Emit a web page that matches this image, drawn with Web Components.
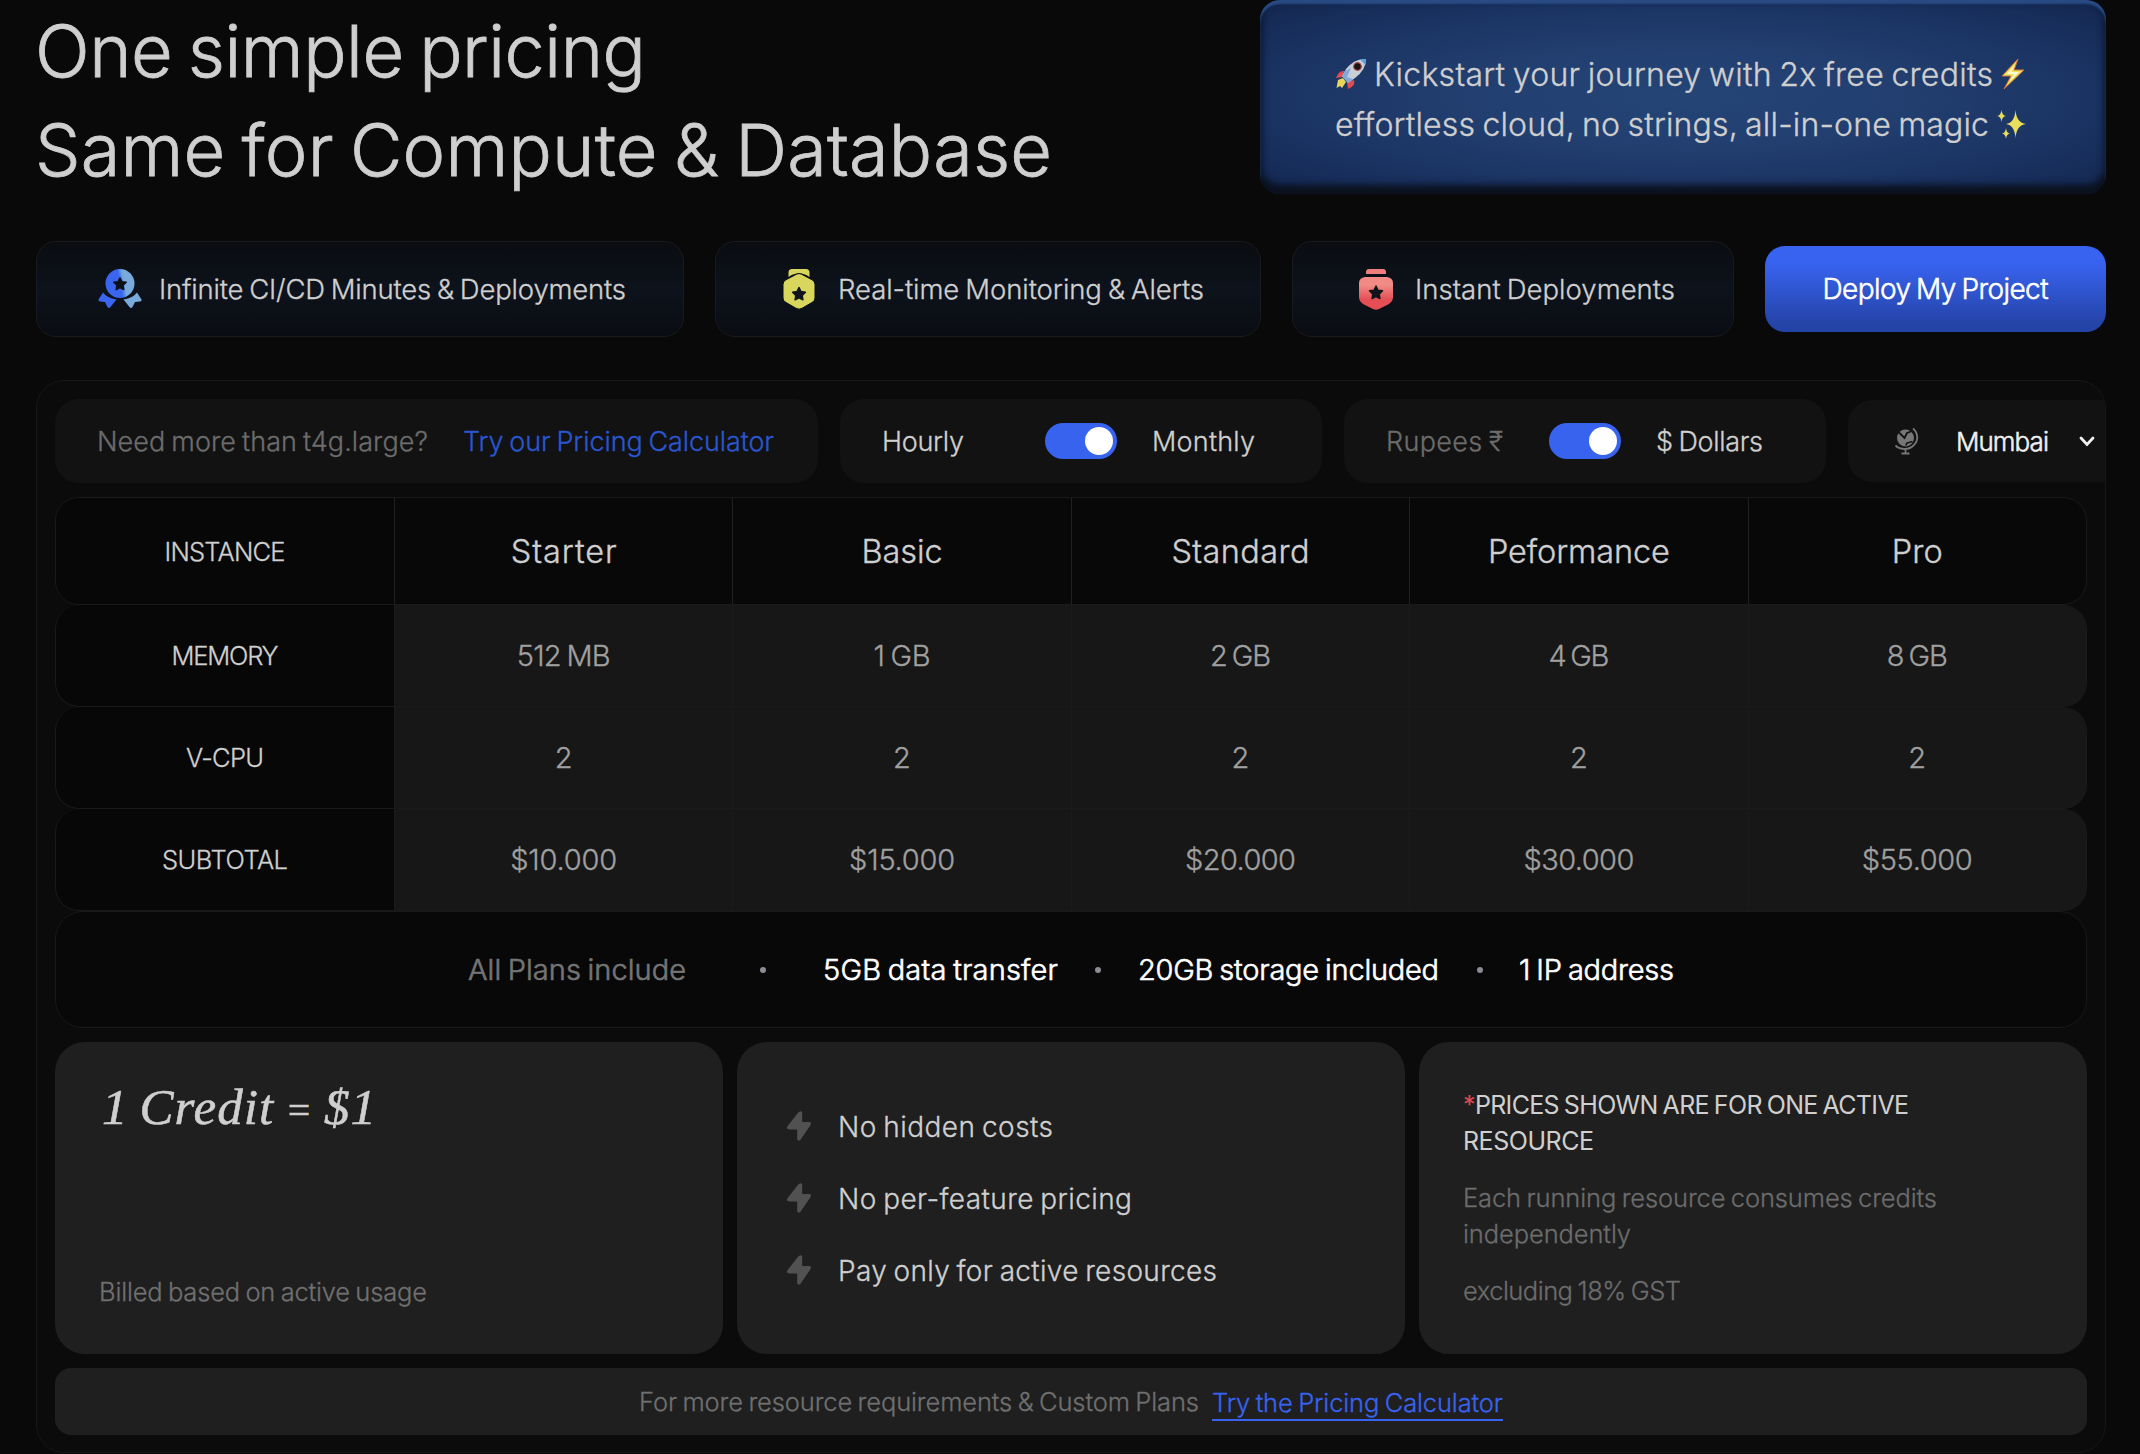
<!DOCTYPE html>
<html lang="en">
<head>
<meta charset="utf-8">
<title>Pricing</title>
<style>
  html, body { margin: 0; background: #090909; }
  body {
    height: 1454px;
    overflow: hidden;
    color: #cfcfcf;
    font-family: Inter, "Open Sans", "Liberation Sans", sans-serif;
    font-weight: 300;
    --stroke: 0.011em;
  }
</style>
</head>
<body>
<pricing-page>
  <page-title slot="title">
    <text-run size="72" w="611">One simple pricing</text-run>
    <text-run size="72" w="1017">Same for Compute &amp; Database</text-run>
  </page-title>
  <promo-banner slot="promo"></promo-banner>

  <feature-pill slot="features" icon="ribbon" style="width:648px"><text-run size="27.5" w="467">Infinite CI/CD Minutes &amp; Deployments</text-run></feature-pill>
  <feature-pill slot="features" icon="hex" style="width:546px"><text-run size="27.5" w="366">Real-time Monitoring &amp; Alerts</text-run></feature-pill>
  <feature-pill slot="features" icon="shield" style="width:442px"><text-run size="27.5" w="260">Instant Deployments</text-run></feature-pill>
  <deploy-button slot="features"><text-run size="28" w="226">Deploy My Project</text-run></deploy-button>

  <pricing-toolbar slot="panel"></pricing-toolbar>
  <plan-table slot="panel"></plan-table>
  <plan-includes slot="panel"></plan-includes>
  <card-row slot="panel">
    <info-card>
      <credit-rate></credit-rate>
    </info-card>
    <info-card>
      <perk-list items="No hidden costs:215|No per-feature pricing:294|Pay only for active resources:379"></perk-list>
    </info-card>
    <info-card>
      <price-note></price-note>
    </info-card>
  </card-row>
  <custom-plans slot="panel"></custom-plans>
</pricing-page>

<script>
const icons = {
  ribbon: `<svg width="46" height="42" viewBox="0 0 46 42">
    <defs><linearGradient id="g" x1="0" x2="1" y1=".2" y2="0"><stop offset=".42" stop-color="#3a66ef"/><stop offset=".58" stop-color="#78abdc"/></linearGradient></defs>
    <path d="M6 24.500L1.500 31.500Q1 33.500 3 33.500L8 34L10.500 39Q12 41 13.500 39L19.500 31.500Q10 30 6 24.500Z" fill="#3a66ef"/>
    <path d="M40 24.500L44.500 31.500Q45 33.500 43 33.500L38 34L35.500 39Q34 41 32.500 39L26.500 31.500Q36 30 40 24.500Z" fill="#78abdc"/>
    <circle cx="23" cy="15.500" r="14.500" fill="url(#g)"/>
    <path d="M23 9.800l1.900 3.900 4.300.6-3.100 3 .7 4.300-3.800-2-3.800 2 .7-4.300-3.100-3 4.300-.6z" fill="#0c1119" stroke="#0c1119" stroke-width="1.500" stroke-linejoin="round"/></svg>`,
  hex: `<svg width="46" height="42" viewBox="0 0 46 42">
    <path d="M12.500 9V4.500Q12.500 1 16 1H30Q33.500 1 33.500 4.500V9Q23 1.500 12.500 9Z" fill="#d9d65e"/>
    <path d="M20.500 6.200Q23 4.900 25.500 6.200L36.500 12Q39 13.600 39 16.500V30Q39 32.600 36.800 34L26 40.300Q23 42 20 40.300L9.200 34Q7 32.600 7 30V16.500Q7 13.600 9.500 12Z" fill="#d9d65e" stroke="#0b0e14" stroke-width="1"/>
    <path d="M23 19.500l2 4 4.400.7-3.200 3.200.7 4.400-3.900-2-3.900 2 .7-4.400-3.200-3.200 4.400-.7z" fill="#11151b" stroke="#11151b" stroke-width="1.500" stroke-linejoin="round"/></svg>`,
  shield: `<svg width="46" height="42" viewBox="0 0 46 42">
    <defs><linearGradient id="g" x1="0" x2="0" y1="0" y2="1"><stop offset=".25" stop-color="#f08b86"/><stop offset=".7" stop-color="#e54e55"/></linearGradient></defs>
    <path d="M13 6V4Q13 1 16 1H30Q33 1 33 4V6Z" fill="#ee7f7c"/>
    <path d="M12 9H34Q40 10 40 15V29Q40 34 35 36.500L26 41Q23 42.300 20 41L11 36.500Q6 34 6 29V15Q6 10 12 9Z" fill="url(#g)"/>
    <path d="M23 18l2 4.200 4.500.6-3.300 3.300.7 4.500-3.900-2.100-3.900 2.100.7-4.500-3.300-3.300 4.500-.6z" fill="#11151b" stroke="#11151b" stroke-width="1.500" stroke-linejoin="round"/></svg>`,
  rocket: `<svg width="32" height="32" viewBox="0 0 32 32">
    <path d="M9 13Q4 12 1 20L8 19Z" fill="#e04a50"/><path d="M19 22Q21 28 13 31L12 24Z" fill="#e04a50"/>
    <path d="M3 22L8 20L11 24L7 30L5 28L1.500 30Z" fill="#e8d458"/>
    <path d="M31 1Q20 0 11 11L7 18L13 25L20 20Q31 12 31 1Z" fill="#c9ced6"/>
    <path d="M31 1L25 1.500L30.500 7Z" fill="#5e9bd8"/>
    <path d="M10 13L16 10L12 19L18 21L13 25L7 18Z" fill="#7fa9dd"/>
    <circle cx="22.500" cy="8.500" r="3.800" fill="#1a1416" stroke="#a8484c" stroke-width="1.200"/></svg>`,
  zap: `<svg width="26" height="32" viewBox="0 0 26 32">
    <path d="M18 1L2 18H11L4 31L24 12H14Z" fill="#ece25e" stroke="#d2703f" stroke-width="1"/>
    <path d="M15 7L7 16H14L10 23L19 14H11Z" fill="#fbf9d8"/></svg>`,
  sparkles: `<svg width="30" height="30" viewBox="0 0 30 30" fill="#e6de5c">
    <path d="M18.500 1Q19.500 14 29 15Q19.500 16 18.500 29Q17.500 16 9 15Q17.500 14 18.500 1Z"/>
    <path d="M4.500 1Q5 6.500 9 7Q5 7.500 4.500 13Q4 7.500 0 7Q4 6.500 4.500 1Z"/>
    <path d="M9 19Q9.500 24 13 24.500Q9.500 25 9 30Q8.500 25 5 24.500Q8.500 24 9 19Z"/></svg>`,
  globe: `<svg width="26" height="28" viewBox="0 0 26 28" fill="none" stroke="#777" stroke-width="1.800">
    <circle cx="11.500" cy="11" r="8.500" fill="#777" stroke="none"/>
    <path d="M5 5.500L10.500 11L13 6L17 4.500" stroke="#121212" stroke-width="1.800"/>
    <path d="M12 18.500Q12 15.500 15 15.500L18.500 14.500" stroke="#121212" stroke-width="1.500"/>
    <path d="M19 1.500Q25 7 22.500 14.500Q18.500 22 11 22Q5 22 1.500 18.500M11.500 22V26M7.500 26.500H15.500"/></svg>`,
  bolt: `<svg width="26" height="32" viewBox="0 0 26 32" fill="#515151">
    <path d="M14 1.500Q16.200.8 16.200 3V12H23Q26 12.300 24.600 15L14.500 29.800Q12 32 11.200 29V19.500H3Q0 19 1.400 16.300L11.500 3.500Q12.800 1.700 14 1.500Z"/></svg>`
};

// Base for every element: opens a shadow root and fills it from a template.
class Base extends HTMLElement {
  constructor() {
    super();
    this.dom = this.attachShadow({ mode: "open" });
  }

  connectedCallback() {
    const template = document.createElement("template");
    template.innerHTML = `<style>${this.css()}</style>${this.markup()}`;
    this.dom.replaceChildren(document.importNode(template.content, true));
    this.ready();
  }

  css() { return ":host { display: block; }"; }
  markup() { return "<slot></slot>"; }
  ready() {}
}

// One line of text, tracked so that it fills the width it is given.
class TextRun extends Base {
  css() {
    return `
      :host { display: block; flex: none; white-space: nowrap; width: ${this.getAttribute("w")}px; }
      span {
        display: block; width: max-content; font-size: ${this.getAttribute("size")}px;
        word-spacing: -0.06em; -webkit-text-stroke: var(--stroke) currentColor;
      }
    `;
  }
  markup() { return "<span><slot></slot></span>"; }
  ready() {
    const span = this.dom.querySelector("span");
    const count = this.textContent.length;
    if (count < 2) return;
    const gap = (Number(this.getAttribute("w")) - span.getBoundingClientRect().width) / (count - 1);
    span.style.letterSpacing = `${gap.toFixed(3)}px`;
  }
}

class PricingPage extends Base {
  css() {
    return `
      :host { display: block; padding: 0 34px 0 36px; }
      header { display: flex; justify-content: space-between; height: 241px; }
      .features { display: flex; align-items: center; justify-content: space-between; height: 96px; }
      .panel {
        display: flex; flex-direction: column; box-sizing: border-box;
        height: 1073px; margin-top: 43px; padding: 18px 0 0 18px; overflow: hidden;
        background: #0b0b0b; border: 1px solid #171717; border-radius: 28px;
      }
    `;
  }
  markup() {
    return `
      <header><slot name="title"></slot><slot name="promo"></slot></header>
      <div class="features"><slot name="features"></slot></div>
      <div class="panel"><slot name="panel"></slot></div>
    `;
  }
}

class PageTitle extends Base {
  css() { return ":host { display: block; padding-top: 1px; line-height: 99px; margin-left: -1px; }"; }
}

class PromoBanner extends Base {
  css() {
    return `
      :host {
        display: flex; flex-direction: column; box-sizing: border-box;
        width: 846px; height: 194px; padding: 50px 0 0 75px; line-height: 50px;
        border-radius: 20px;
        background: radial-gradient(ellipse 80% 80% at 50% 50%, #254577 0%, #213e6f 35%, #182f5d 70%, #102045 100%);
        box-shadow: inset 0 4px 2px #284b84, inset 0 -9px 7px #0b111d, inset 0 0 8px #0e1a33;
      }
      div { display: flex; align-items: center; height: 50px; }
      svg { margin-bottom: 2px; }
    `;
  }
  markup() {
    return `
      <div style="gap:7px">${icons.rocket}<text-run size="32" w="619">Kickstart your journey with 2x free credits</text-run>${icons.zap}</div>
      <div style="gap:8px"><text-run size="32" w="654">effortless cloud, no strings, all-in-one magic</text-run>${icons.sparkles}</div>
    `;
  }
}

class FeaturePill extends Base {
  css() {
    return `
      :host {
        display: flex; align-items: center; gap: 16px; box-sizing: border-box; height: 96px;
        padding: 0 0 1px 60px; border: 1px solid #191a1d; border-radius: 20px;
        background: linear-gradient(#0a0c10, #0d131c 50%, #0a0c12);
      }
      svg { flex: none; }
      ::slotted(text-run) { margin-top: 1px; }
    `;
  }
  markup() { return `${icons[this.getAttribute("icon")]}<slot></slot>`; }
}

class DeployButton extends Base {
  css() {
    return `
      :host {
        display: flex; align-items: center; justify-content: center; width: 341px; height: 86px;
        border-radius: 20px; color: #fff; --stroke: 0.02em;
        background: linear-gradient(#3863f0 20%, #2443a6 92%);
      }
    `;
  }
}

class ToggleSwitch extends Base {
  css() {
    return `
      :host {
        display: flex; align-items: center; justify-content: flex-end; box-sizing: border-box; flex: none;
        width: 72px; height: 36px; padding-right: 4px; border-radius: 18px; background: #3863ee;
      }
      i { width: 28px; height: 28px; border-radius: 50%; background: #fff; }
    `;
  }
  markup() { return "<i></i>"; }
}

class PricingToolbar extends Base {
  css() {
    return `
      :host { display: flex; align-items: center; gap: 22px; height: 84px; flex: none; }
      .box {
        display: flex; align-items: center; flex: none; box-sizing: border-box; height: 84px;
        border-radius: 24px; background: #121212;
      }
      .muted { color: #6c6c6c; }
      .link { color: #2a56cf; }
      .region { height: 82px; width: 300px; padding-left: 46px; color: #f0f0f0; }
    `;
  }
  markup() {
    return `
      <div class="box" style="width:763px;padding-left:42px;gap:35px">
        <text-run class="muted" size="27" w="331">Need more than t4g.large?</text-run>
        <text-run class="link" size="27" w="311">Try our Pricing Calculator</text-run>
      </div>
      <div class="box" style="width:482px;padding-left:42px">
        <text-run size="27" w="82">Hourly</text-run>
        <toggle-switch style="margin:0 35px 0 81px"></toggle-switch>
        <text-run size="27" w="103">Monthly</text-run>
      </div>
      <div class="box" style="width:482px;padding-left:42px">
        <text-run class="muted" size="27" w="117">Rupees ₹</text-run>
        <toggle-switch style="margin:0 35px 0 46px"></toggle-switch>
        <text-run size="27" w="107">$ Dollars</text-run>
      </div>
      <div class="box region">
        ${icons.globe}
        <text-run size="26" w="93" style="margin:0 30px 0 36px;--stroke:0.02em">Mumbai</text-run>
        <svg width="16" height="11" viewBox="0 0 16 11" fill="none" stroke="#f0f0f0" stroke-width="2.800" stroke-linecap="round"><path d="M2 2L8 8.500L14 2"/></svg>
      </div>
    `;
  }
}

class PlanTable extends Base {
  css() {
    return `
      :host { display: block; flex: none; width: 2032px; margin-top: 14px; }
      .row {
        display: grid; grid-template-columns: 338px repeat(5, 1fr); box-sizing: border-box; height: 102px;
        border: 1px solid #1a1a1a; border-top: 0; border-radius: 24px; overflow: hidden; background: #171717;
      }
      .row > div { display: flex; align-items: center; justify-content: center; border-left: 1px solid #1b1b1b; color: #a0a0a0; }
      .row > div:first-child { border-left: 0; background: #070707; color: #cfcfcf; }
      .head { height: 108px; border-top: 1px solid #1a1a1a; background: #080808; }
      .head > div { border-color: #202020; color: #cfcfcf; }
    `;
  }
  markup() {
    // each cell is [text, width]
    const rows = [
      [["INSTANCE", 121], ["Starter", 106], ["Basic", 81], ["Standard", 138], ["Peformance", 182], ["Pro", 51]],
      [["MEMORY", 107], ["512 MB", 94], ["1 GB", 57], ["2 GB", 61], ["4 GB", 61], ["8 GB", 61]],
      [["V-CPU", 78], ["2", 18], ["2", 18], ["2", 18], ["2", 18], ["2", 18]],
      [["SUBTOTAL", 126], ["$10.000", 107], ["$15.000", 106], ["$20.000", 111], ["$30.000", 111], ["$55.000", 111]]
    ];
    return rows.map((cells, r) => `<div class="row${r ? "" : " head"}">${cells.map(([text, w], c) => {
      const size = c === 0 ? 25.5 : r === 0 ? 32.5 : 29;
      return `<div><text-run size="${size}" w="${w}">${text}</text-run></div>`;
    }).join("")}</div>`).join("");
  }
}

class PlanIncludes extends Base {
  css() {
    return `
      :host {
        display: flex; align-items: center; flex: none; box-sizing: border-box; width: 2032px; height: 117px;
        padding-left: 412px; border: 1px solid #191919; border-radius: 28px; background: #080808; color: #fff; --stroke: 0.022em;
      }
      .muted { color: #747474; }
      i { width: 6px; height: 6px; border-radius: 50%; background: #8b8d92; flex: none; }
    `;
  }
  markup() {
    return `
      <text-run class="muted" size="29" w="218">All Plans include</text-run>
      <i style="margin:0 57px 0 74px"></i>
      <text-run size="29" w="235">5GB data transfer</text-run>
      <i style="margin:0 37px 0 37px"></i>
      <text-run size="29" w="301">20GB storage included</text-run>
      <i style="margin:0 36px 0 38px"></i>
      <text-run size="29" w="155">1 IP address</text-run>
    `;
  }
}

class CardRow extends Base {
  css() { return ":host { display: flex; flex: none; gap: 14px; width: 2032px; height: 312px; margin-top: 14px; }"; }
}

class InfoCard extends Base {
  css() {
    return ":host { display: flex; flex-direction: column; flex: 1; box-sizing: border-box; border-radius: 30px; background: #1f1f1f; }";
  }
}

class CreditRate extends Base {
  css() {
    return `
      :host { display: flex; flex-direction: column; justify-content: space-between; flex: 1; padding: 35px 0 44px 44px; }
      .rate {
        font-family: "Liberation Serif", serif; font-style: italic; font-weight: 400; line-height: 60px;
        margin-left: 3px;
      }
      .rate b { font-weight: 400; font-size: 0.78em; line-height: 1; }
      .note { color: #707070; line-height: 36px; }
    `;
  }
  markup() {
    return `
      <text-run class="rate" size="51" w="274">1 Credit <b>=</b> $1</text-run>
      <text-run class="note" size="25.5" w="328">Billed based on active usage</text-run>
    `;
  }
}

class PerkList extends Base {
  css() {
    return `
      :host { display: flex; flex-direction: column; justify-content: center; flex: 1; padding: 2px 0 0 49px; }
      div { display: flex; align-items: center; gap: 26px; height: 72px; }
      svg { margin-bottom: 2px; }
    `;
  }
  markup() {
    return this.getAttribute("items").split("|").map(item => {
      const [text, w] = item.split(":");
      return `<div>${icons.bolt}<text-run size="28" w="${w}">${text}</text-run></div>`;
    }).join("");
  }
}

class PriceNote extends Base {
  css() {
    return `
      :host { display: flex; flex-direction: column; gap: 21px; padding: 45px 0 0 44px; line-height: 36px; color: #6c6c6c; }
      b { color: #e04a50; font-weight: 400; }
      .strong { color: #cfcfcf; font-weight: 400; --stroke: 0; }
    `;
  }
  markup() {
    return `
      <div class="strong">
        <text-run size="25" w="446"><b>*</b>PRICES SHOWN ARE FOR ONE ACTIVE</text-run>
        <text-run size="25" w="131">RESOURCE</text-run>
      </div>
      <div>
        <text-run size="25.5" w="474">Each running resource consumes credits</text-run>
        <text-run size="25.5" w="168">independently</text-run>
      </div>
      <text-run size="25.5" w="218">excluding 18% GST</text-run>
    `;
  }
}

class CustomPlans extends Base {
  css() {
    return `
      :host {
        display: flex; align-items: center; gap: 13px; flex: none; box-sizing: border-box; width: 2032px; height: 67px;
        margin-top: 14px; padding-left: 584px; border-radius: 16px; background: #1f1f1f; color: #6f6f6f;
      }
      a { color: #3863f0; border-bottom: 2px solid #3863f0; line-height: 33px; margin-top: 3px; }
    `;
  }
  markup() {
    return `
      <text-run size="25.500" w="560">For more resource requirements &amp; Custom Plans</text-run>
      <a><text-run size="25.500" w="291">Try the Pricing Calculator</text-run></a>
    `;
  }
}

const elements = {
  "text-run": TextRun,
  "pricing-page": PricingPage,
  "page-title": PageTitle,
  "promo-banner": PromoBanner,
  "feature-pill": FeaturePill,
  "deploy-button": DeployButton,
  "toggle-switch": ToggleSwitch,
  "pricing-toolbar": PricingToolbar,
  "plan-table": PlanTable,
  "plan-includes": PlanIncludes,
  "card-row": CardRow,
  "info-card": InfoCard,
  "credit-rate": CreditRate,
  "perk-list": PerkList,
  "price-note": PriceNote,
  "custom-plans": CustomPlans
};

Object.entries(elements).forEach(([tag, Component]) => {
  if (window.customElements.get(tag) === undefined) {
    window.customElements.define(tag, Component);
  }
});
</script>
</body>
</html>
